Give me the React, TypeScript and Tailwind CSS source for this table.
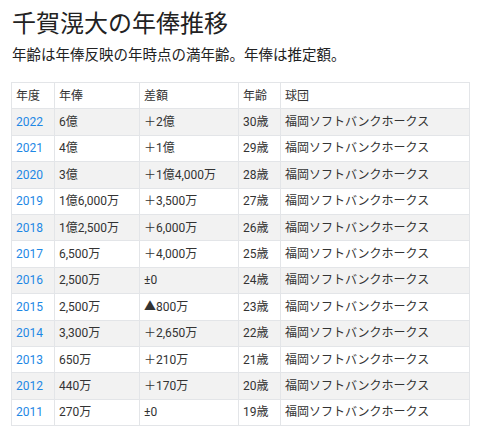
import React from 'react';

const rows = [
  { year: '2022', salary: '6億', diff: '＋2億', age: '30歳' },
  { year: '2021', salary: '4億', diff: '＋1億', age: '29歳' },
  { year: '2020', salary: '3億', diff: '＋1億4,000万', age: '28歳' },
  { year: '2019', salary: '1億6,000万', diff: '＋3,500万', age: '27歳' },
  { year: '2018', salary: '1億2,500万', diff: '＋6,000万', age: '26歳' },
  { year: '2017', salary: '6,500万', diff: '＋4,000万', age: '25歳' },
  { year: '2016', salary: '2,500万', diff: '±0', age: '24歳' },
  { year: '2015', salary: '2,500万', diff: '▲800万', age: '23歳' },
  { year: '2014', salary: '3,300万', diff: '＋2,650万', age: '22歳' },
  { year: '2013', salary: '650万', diff: '＋210万', age: '21歳' },
  { year: '2012', salary: '440万', diff: '＋170万', age: '20歳' },
  { year: '2011', salary: '270万', diff: '±0', age: '19歳' },
];

const team = '福岡ソフトバンクホークス';

const App: React.FC = () => {
  return (
    <div
      className="min-h-screen bg-white px-[11px] text-[#222]"
      style={{ fontFamily: 'Roboto, "Noto Sans CJK JP", sans-serif' }}
    >
      {/* Heading */}
      <h1 className="pt-[10px] pl-px text-[24px] leading-[29px] font-normal text-[#222]">
        千賀滉大の年俸推移
      </h1>
      <p className="mt-[7px] pl-px text-[14.5px] leading-[20px] font-normal text-[#222]">
        年齢は年俸反映の年時点の満年齢。年俸は推定額。
      </p>

      {/* Table */}
      <table className="mt-[16px] w-[458px] table-fixed border-collapse text-[12px] text-[#333]">
        <colgroup>
          <col className="w-[43px]" />
          <col className="w-[85px]" />
          <col className="w-[99px]" />
          <col className="w-[42px]" />
          <col className="w-[189px]" />
        </colgroup>
        <thead>
          <tr className="h-[26.4px] bg-white">
            {['年度', '年俸', '差額', '年齢', '球団'].map((h) => (
              <th key={h} className="border border-[#e3e5e8] px-[4px] text-left font-normal">
                {h}
              </th>
            ))}
          </tr>
        </thead>
        <tbody>
          {rows.map((r, i) => (
            <tr key={r.year} className={`h-[26.4px] ${i % 2 === 0 ? 'bg-[#f2f2f2]' : 'bg-white'}`}>
              <td className="border border-[#e3e5e8] px-[4px] text-[#1e88e5]">{r.year}</td>
              <td className="border border-[#e3e5e8] px-[4px]">{r.salary}</td>
              <td className="border border-[#e3e5e8] px-[4px]">{r.diff}</td>
              <td className="border border-[#e3e5e8] px-[4px]">{r.age}</td>
              <td className="border border-[#e3e5e8] px-[4px]">{team}</td>
            </tr>
          ))}
        </tbody>
      </table>
    </div>
  );
};

export default App;
